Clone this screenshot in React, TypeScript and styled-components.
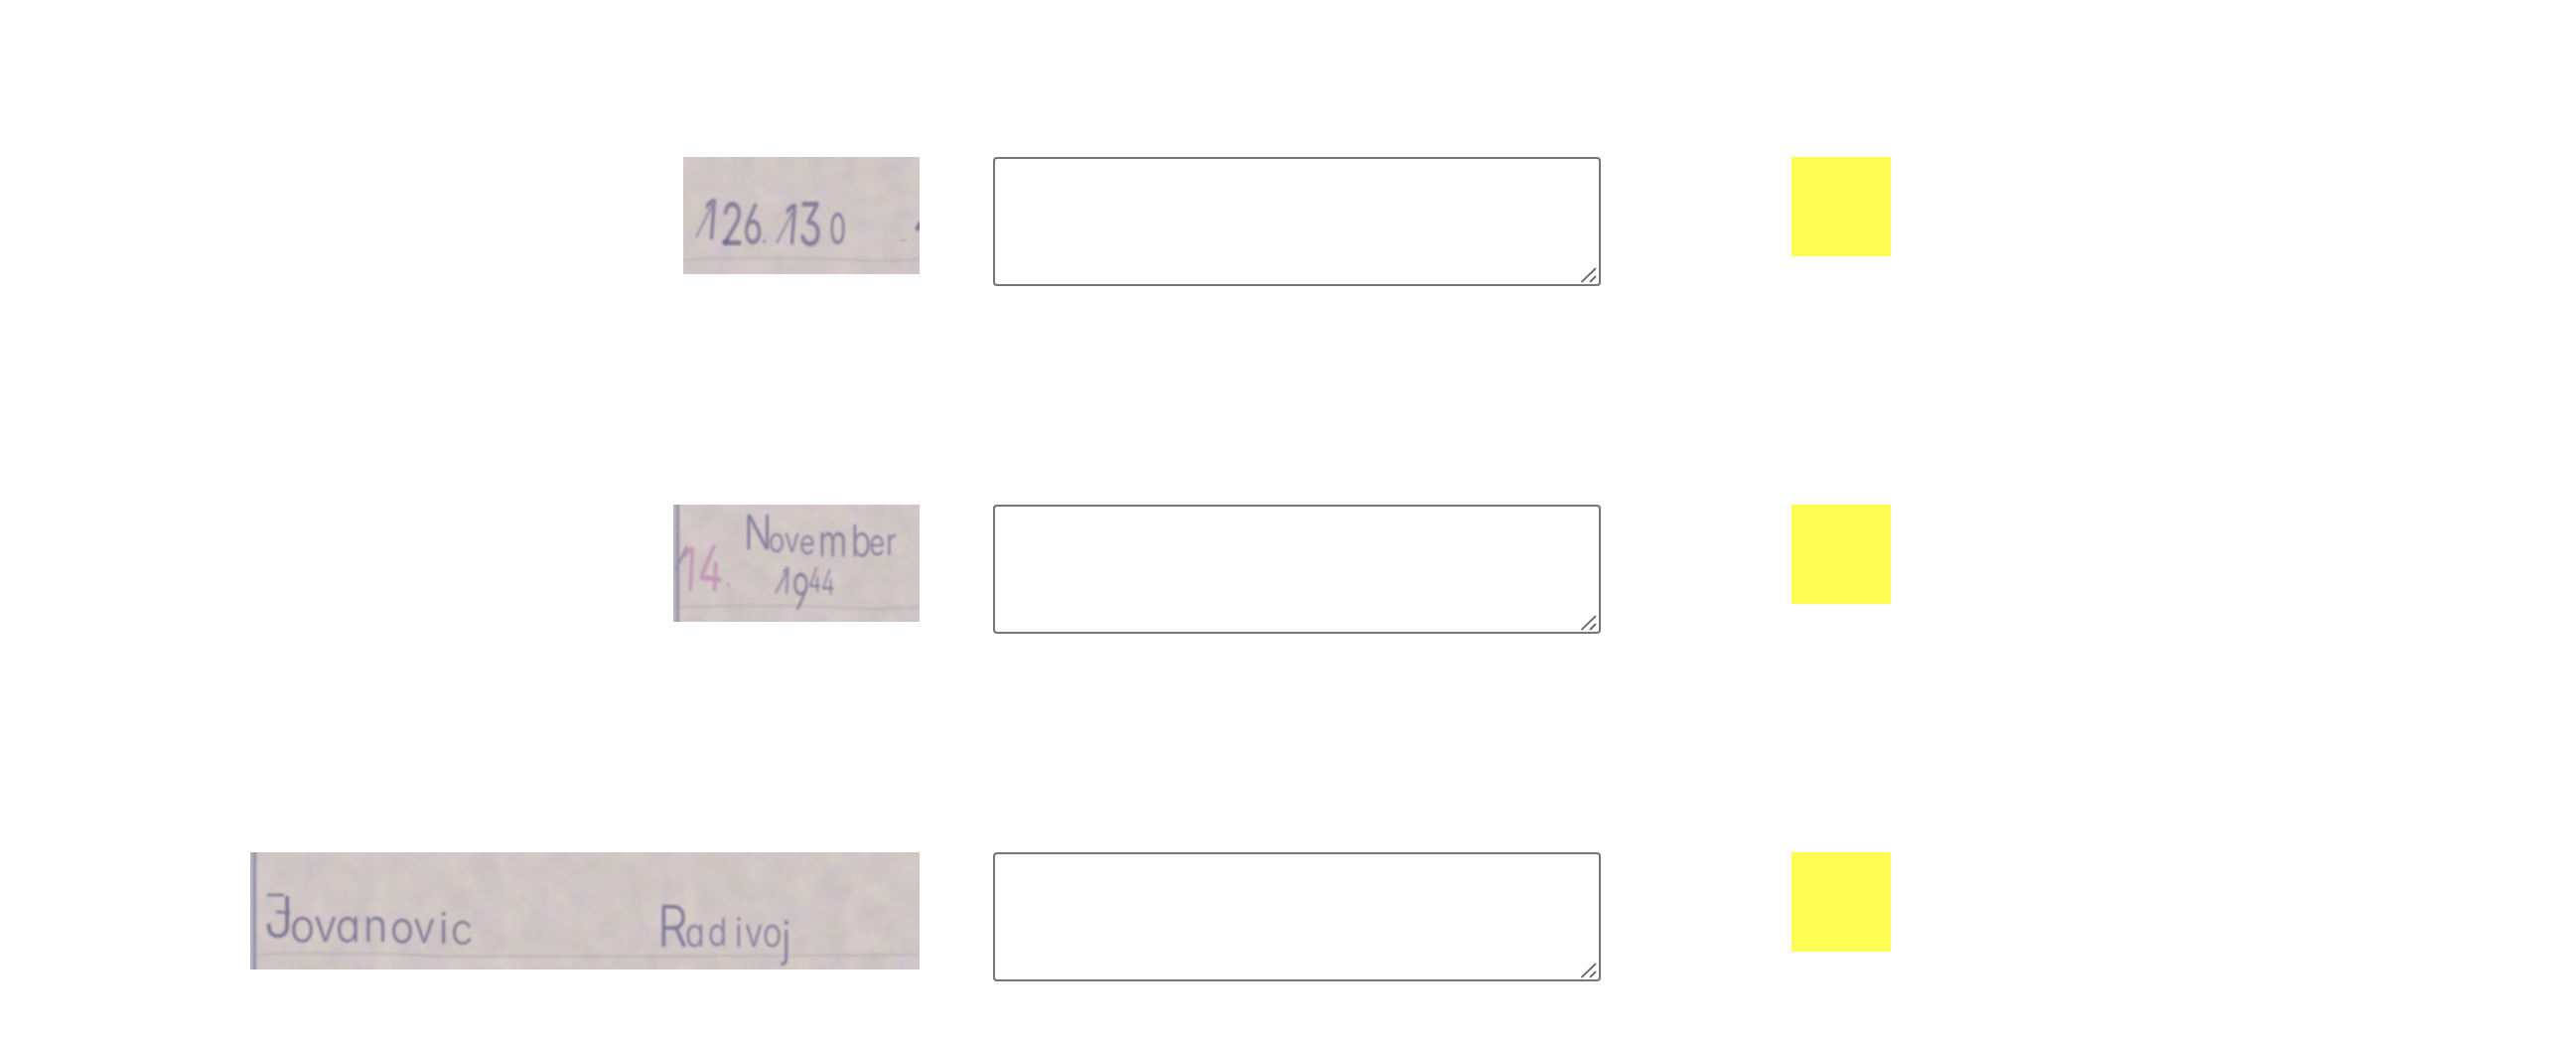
import React from "react";
import styled, { createGlobalStyle } from "styled-components";

const GlobalStyle = createGlobalStyle`
  body {
    margin: 0;
    background: #fff;
    font-family: "Liberation Sans", Arial, sans-serif;
  }
`;

const Page = styled.main`
  box-sizing: border-box;
  height: 1050px;
  padding-top: 158px;
  overflow: hidden;
`;

const Row = styled.section`
  display: grid;
  grid-template-columns: 926px 612px 100px;
  column-gap: 0;
  align-items: start;
  height: 350px;
`;

const SnippetCell = styled.div`
  display: flex;
  justify-content: flex-end;
`;

const Snippet = styled.svg`
  display: block;
  height: 118px;
  overflow: hidden;
`;

const Field = styled.div`
  position: relative;
  margin-left: 74px;
  width: 612px;
  height: 130px;
`;

const Transcription = styled.textarea`
  display: block;
  box-sizing: border-box;
  width: 100%;
  height: 100%;
  margin: 0;
  padding: 4px;
  border: 2px solid #767676;
  border-radius: 4px;
  background: #fff;
  font: 26px "Liberation Mono", monospace;
  resize: none;
  outline: none;
`;

const Grip = styled.svg`
  position: absolute;
  right: 4px;
  bottom: 3px;
  width: 16px;
  height: 16px;
  pointer-events: none;
`;

const Swatch = styled.div`
  width: 100px;
  height: 100px;
  margin-left: 266px;
  background: #fffd54;
`;

const Ink = styled.text<{ $color: string; $weight?: number }>`
  font-family: Inter, "Open Sans", sans-serif;
  font-weight: ${(p) => p.$weight ?? 300};
  font-feature-settings: "cv11" 1, "ss01" 1;
  fill: ${(p) => p.$color};
`;

/* character, x, baseline, font size, rotation */
type Glyph = [string, number, number, number, number?];

interface WordProps {
  glyphs: Glyph[];
  stretch: number;
  color: string;
  weight?: number;
}

const Word = ({ glyphs, stretch, color, weight }: WordProps) => (
  <Ink $color={color} $weight={weight} transform={`scale(${stretch} 1)`}>
    {glyphs.map(([char, x, y, size, turn = 0], i) => (
      <tspan key={i} x={x / stretch} y={y} fontSize={size} rotate={turn}>
        {char}
      </tspan>
    ))}
  </Ink>
);

interface PaperProps {
  id: string;
  width: number;
  seed: number;
  margin?: boolean;
  children: React.ReactNode;
}

const Paper = ({ id, width, seed, margin, children }: PaperProps) => (
  <Snippet width={width} height={118} viewBox={`0 0 ${width} 118`}>
    <defs>
      <filter id={`${id}-grain`} x="0" y="0" width="100%" height="100%" colorInterpolationFilters="sRGB">
        <feTurbulence type="fractalNoise" baseFrequency="0.04" numOctaves="3" seed={seed} />
        <feColorMatrix values="0.07 0.02 0 0 0.771  0.04 0.05 0 0 0.731  0.03 0 0.05 0 0.733  0 0 0 0 1" />
      </filter>
      <filter id={`${id}-soft`} x="-5%" y="-10%" width="110%" height="120%">
        <feGaussianBlur stdDeviation="1.3" />
      </filter>
    </defs>
    <rect width={width} height="118" fill="#d0c7c6" />
    <rect width={width} height="118" filter={`url(#${id}-grain)`} />
    <g filter={`url(#${id}-soft)`}>
      <path
        d={`M0 104 Q20 102 45 102 T110 102 T175 104 T${width} 103`}
        fill="none"
        stroke="#aaa6b1"
        strokeWidth="2.6"
        opacity=".42"
      />
      {margin && (
        <>
          <path d="M1 -4V122" stroke="#b4b0ba" strokeWidth="3" />
          <path d="M4.5 -4V122" stroke="#9090a7" strokeWidth="3" />
        </>
      )}
      {children}
    </g>
  </Snippet>
);

const NumberSnippet = () => (
  <Paper id="number" width={238} seed={4}>
    <Word
      color="#858099"
      stretch={0.62}
      weight={400}
      glyphs={[
        ["1", 19, 81, 56, 7],
        ["2", 38, 89, 61],
        ["6", 60, 88, 56],
        [".", 79, 87, 28],
        ["1", 100, 86, 56, 7],
        ["3", 116, 90, 62],
        ["0", 147, 88, 44],
      ]}
    />
    <path d="M13 81L31 45M94 87L112 52" stroke="#928da5" strokeWidth="2" fill="none" />
    <path d="M40 87L46 84" stroke="#706b91" strokeWidth="5" />
    <path d="M239 66L235 74" stroke="#7a7593" strokeWidth="4" />
    <path d="M218 84H225" stroke="#b5adb9" strokeWidth="2" />
  </Paper>
);

const DateSnippet = () => (
  <Paper id="date" width={248} seed={11} margin>
    <Word
      color="#c498b5"
      stretch={0.62}
      weight={400}
      glyphs={[
        ["1", 7, 85, 60, 5],
        ["4", 24, 85, 64, 4],
        [".", 53, 83, 28],
      ]}
    />
    <path d="M2 66L14 42" stroke="#938ca8" strokeWidth="2.4" />
    <Word
      color="#7f7a97"
      stretch={0.78}
      glyphs={[
        ["N", 71, 45, 48],
        ["o", 96, 48, 35],
        ["v", 112, 48, 35],
        ["e", 127, 50, 35],
        ["m", 146, 52, 43],
        ["b", 179, 52, 43],
        ["e", 197, 51, 36],
        ["r", 214, 51, 38],
      ]}
    />
    <Word
      color="#7e7a98"
      stretch={0.62}
      glyphs={[
        ["1", 108, 89, 37, 6],
        ["9", 119, 105, 50, 2],
        ["4", 136, 88, 34],
        ["4", 149, 91, 35],
      ]}
    />
    <path d="M103 89L115 67" stroke="#8b87a0" strokeWidth="1.8" />
  </Paper>
);

const NameSnippet = () => (
  <Paper id="name" width={674} seed={23} margin>
    <Word
      color="#7d7894"
      stretch={0.92}
      glyphs={[
        ["J", 14, 86, 57],
        ["o", 40, 90, 46],
        ["v", 64, 90, 46],
        ["a", 86, 90, 45],
        ["n", 114, 90, 45],
        ["o", 141, 91, 44],
        ["v", 164, 91, 44],
        ["i", 190, 92, 44],
        ["c", 202, 93, 43],
      ]}
    />
    <path d="M17 43H34M26 60L40 61" stroke="#7d7894" strokeWidth="2.6" />
    <Word
      color="#7f7a9a"
      stretch={0.84}
      glyphs={[
        ["R", 410, 95, 58],
        ["a", 438, 95, 39],
        ["d", 461, 94, 38],
        ["i", 488, 95, 40],
        ["v", 498, 95, 39],
        ["o", 516, 95, 39],
        ["j", 535, 104, 48],
      ]}
    />
  </Paper>
);

const snippets = [NumberSnippet, DateSnippet, NameSnippet];

const App = () => (
  <>
    <GlobalStyle />
    <Page>
      {snippets.map((Scan, i) => (
        <Row key={i}>
          <SnippetCell>
            <Scan />
          </SnippetCell>
          <Field>
            <Transcription aria-label={`Transcription ${i + 1}`} />
            <Grip viewBox="0 0 16 16">
              <path d="M0.5 15L15 1M9 15L15 9" stroke="#6b6b6b" strokeWidth="1.8" fill="none" />
            </Grip>
          </Field>
          <Swatch />
        </Row>
      ))}
    </Page>
  </>
);

export default App;
